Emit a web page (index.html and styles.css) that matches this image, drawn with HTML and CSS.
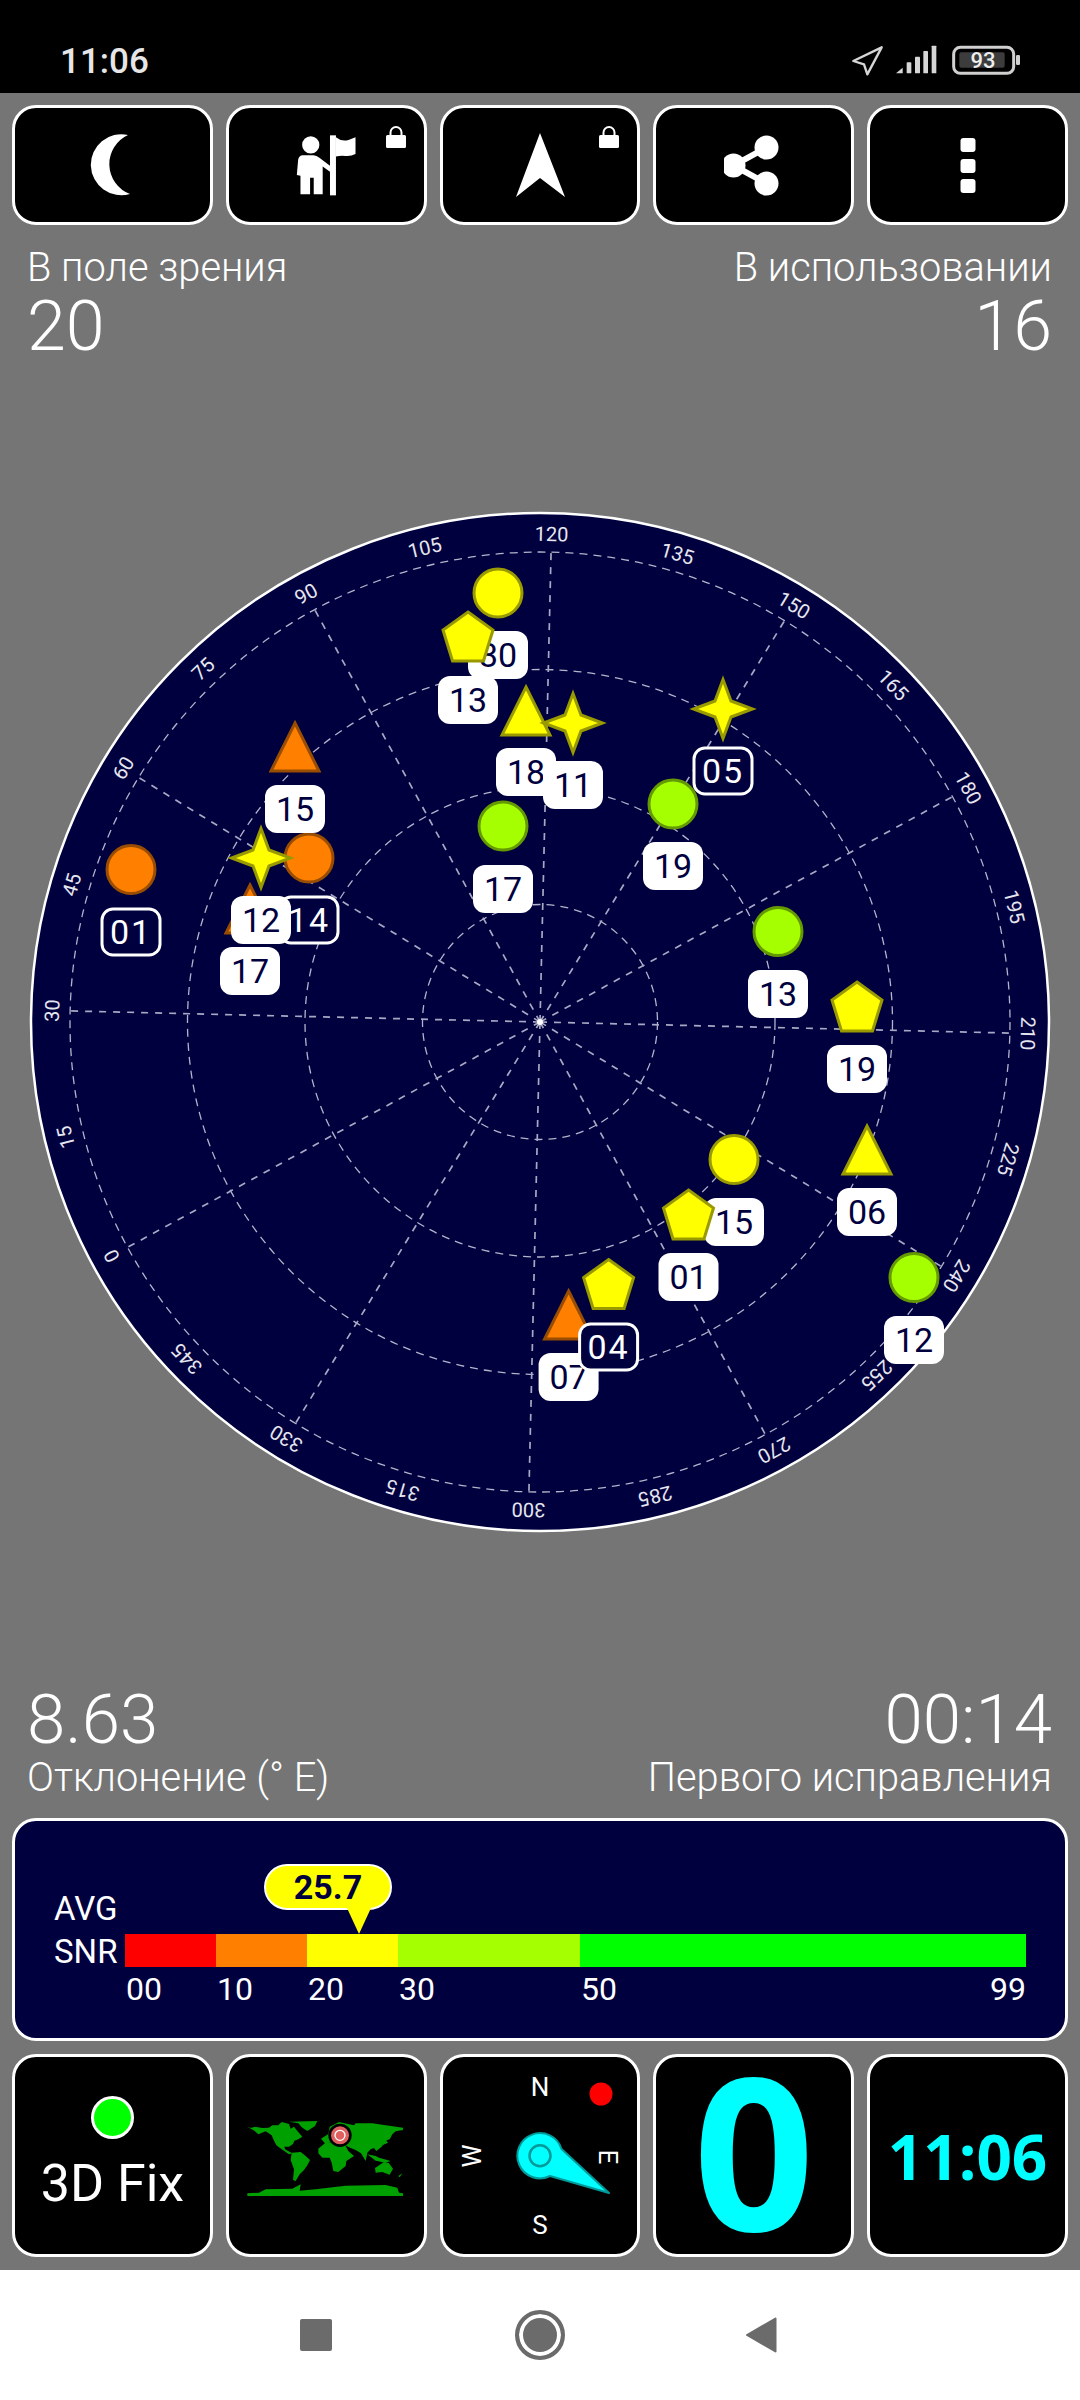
FILE: index.html
```html
<!DOCTYPE html>
<html lang="ru">
<head>
<meta charset="utf-8">
<title>GPS Test</title>
<link rel="stylesheet" href="styles.css">
</head>
<body>
<div class="app">
  <header class="status">
    <span class="clock">11:06</span>
    <svg class="status-icons" viewBox="0 0 570 150" width="190" height="50">
      <path class="loc" d="M40 78 L125 37 L82 118 L72 88 Z"/>
      <g class="bars">
        <path d="M168 115 L188 98 V115 Z"/>
        <rect x="200" y="82" width="14" height="33" rx="2"/>
        <rect x="225" y="65" width="15" height="50" rx="2"/>
        <rect x="250" y="48" width="14" height="67" rx="2"/>
        <rect x="275" y="32" width="14" height="83" rx="2"/>
      </g>
      <rect class="bat-out" x="341" y="37" width="180" height="78" rx="20"/>
      <rect class="bat-in" x="358" y="52" width="136" height="46" rx="6"/>
      <rect class="bat-nub" x="528" y="60" width="12" height="30" rx="4"/>
      <text class="bat-txt" x="429" y="98">93</text>
    </svg>
  </header>

  <main class="main">
    <nav class="row row-top">
      <div class="btn">
        <svg class="ico" viewBox="87 130 52 70" width="52" height="70"><path d="M129 135 A30.5 30.5 0 1 0 131 194 A32 32 0 0 1 129 135 Z"/></svg>
      </div>
      <div class="btn">
        <svg class="ico" viewBox="48 40 180 190" width="60" height="63">
          <circle cx="92" cy="73" r="26"/>
          <path d="M66 104 H100 Q110 104 118 112 L150 136 V154 L128 138 V222 H101 V172 H90 V222 H61 V166 L50 164 L54 118 Q56 106 66 104 Z"/>
          <rect x="150" y="44" width="18" height="181"/>
          <path d="M168 50 Q185 64 206 58 Q218 54 227 50 V100 Q212 108 197 106 Q182 104 168 108 Z"/>
        </svg>
        <svg class="lock" viewBox="0 0 20 22" width="20" height="22"><path class="shackle" d="M4.5 10 V6.5 A5.5 5.5 0 0 1 15.5 6.5 V10"/><rect y="9" width="20" height="13" rx="1.5"/></svg>
      </div>
      <div class="btn">
        <svg class="ico" viewBox="510 130 60 70" width="60" height="70"><path d="M540 133 L565 197 L540 178 L516 197 Z"/></svg>
        <svg class="lock" viewBox="0 0 20 22" width="20" height="22"><path class="shackle" d="M4.5 10 V6.5 A5.5 5.5 0 0 1 15.5 6.5 V10"/><rect y="9" width="20" height="13" rx="1.5"/></svg>
      </div>
      <div class="btn">
        <svg class="ico" viewBox="723 130 60 70" width="60" height="70">
          <path class="share-line" d="M765.5 147.5 L732.5 165.5 L765.5 183.5"/>
          <circle cx="765.5" cy="147.5" r="12"/><circle cx="732.5" cy="165.5" r="12"/><circle cx="765.5" cy="183.5" r="12"/>
        </svg>
      </div>
      <div class="btn">
        <svg class="ico" viewBox="947 130 40 70" width="40" height="70">
          <rect x="959.5" y="138" width="15" height="14" rx="3"/>
          <rect x="959.5" y="159" width="15" height="14" rx="3"/>
          <rect x="959.5" y="179" width="15" height="14" rx="3"/>
        </svg>
      </div>
    </nav>

    <section class="stats stats-top">
      <div class="stat"><div class="stat-label">В поле зрения</div><div class="stat-value stat-value-t">20</div></div>
      <div class="stat stat-right"><div class="stat-label">В использовании</div><div class="stat-value stat-value-t">16</div></div>
    </section>

    <svg class="sky" viewBox="0 500 1080 1044" width="1080" height="1044">
      <defs>
        <g id="m-circle"><circle r="24"/></g>
        <g id="m-tri"><path d="M0 -23 L24 25 H-24 Z"/></g>
        <g id="m-pent"><path d="M0 -25 L25 -7 L15.5 24 H-15.5 L-25 -7 Z"/></g>
        <g id="m-star"><path d="M0 -29.5 L8 -8 L29.5 0 L8 8 L0 29.5 L-8 8 L-29.5 0 L-8 -8 Z"/></g>
      </defs>
      <circle class="disc" cx="540" cy="1022" r="509"/>
      <g transform="translate(540 1022)">
        <g class="rings">
          <circle r="117.5"/><circle r="235"/><circle r="352.5"/><circle r="470"/>
        </g>
        <g class="spokes">
          <line y2="-470" transform="rotate(1.35)"/>
          <line y2="-470" transform="rotate(31.35)"/>
          <line y2="-470" transform="rotate(61.35)"/>
          <line y2="-470" transform="rotate(91.35)"/>
          <line y2="-470" transform="rotate(121.35)"/>
          <line y2="-470" transform="rotate(151.35)"/>
          <line y2="-470" transform="rotate(181.35)"/>
          <line y2="-470" transform="rotate(211.35)"/>
          <line y2="-470" transform="rotate(241.35)"/>
          <line y2="-470" transform="rotate(271.35)"/>
          <line y2="-470" transform="rotate(301.35)"/>
          <line y2="-470" transform="rotate(331.35)"/>
        </g>
        <circle class="hub" r="3"/>
        <g class="ticks">
          <text y="-481" transform="rotate(1.35)">120</text>
          <text y="-481" transform="rotate(16.35)">135</text>
          <text y="-481" transform="rotate(31.35)">150</text>
          <text y="-481" transform="rotate(46.35)">165</text>
          <text y="-481" transform="rotate(61.35)">180</text>
          <text y="-481" transform="rotate(76.35)">195</text>
          <text y="-481" transform="rotate(91.35)">210</text>
          <text y="-481" transform="rotate(106.35)">225</text>
          <text y="-481" transform="rotate(121.35)">240</text>
          <text y="-481" transform="rotate(136.35)">255</text>
          <text y="-481" transform="rotate(151.35)">270</text>
          <text y="-481" transform="rotate(166.35)">285</text>
          <text y="-481" transform="rotate(181.35)">300</text>
          <text y="-481" transform="rotate(196.35)">315</text>
          <text y="-481" transform="rotate(211.35)">330</text>
          <text y="-481" transform="rotate(226.35)">345</text>
          <text y="-481" transform="rotate(241.35)">0</text>
          <text y="-481" transform="rotate(256.35)">15</text>
          <text y="-481" transform="rotate(271.35)">30</text>
          <text y="-481" transform="rotate(286.35)">45</text>
          <text y="-481" transform="rotate(301.35)">60</text>
          <text y="-481" transform="rotate(316.35)">75</text>
          <text y="-481" transform="rotate(331.35)">90</text>
          <text y="-481" transform="rotate(346.35)">105</text>
        </g>
      </g>

      <use class="c-yellow" href="#m-circle" x="498" y="593"/>
      <g class="lbl" transform="translate(498 655)"><rect x="-30" y="-24" width="60" height="48" rx="12"/><text y="12">30</text></g>
      <use class="c-yellow" href="#m-pent" x="468" y="637"/>
      <g class="lbl" transform="translate(468 700)"><rect x="-30" y="-24" width="60" height="48" rx="12"/><text y="12">13</text></g>
      <use class="c-yellow" href="#m-tri" x="526" y="710"/>
      <g class="lbl" transform="translate(526 772)"><rect x="-30" y="-24" width="60" height="48" rx="12"/><text y="12">18</text></g>
      <use class="c-yellow" href="#m-star" x="573" y="723"/>
      <g class="lbl" transform="translate(573 785)"><rect x="-30" y="-24" width="60" height="48" rx="12"/><text y="12">11</text></g>
      <use class="c-lime" href="#m-circle" x="503" y="826"/>
      <g class="lbl" transform="translate(503 889)"><rect x="-30" y="-24" width="60" height="48" rx="12"/><text y="12">17</text></g>

      <use class="c-orange" href="#m-circle" x="131" y="869.5"/>
      <g class="lbl lbl-o" transform="translate(131 932)"><rect x="-29" y="-23" width="58" height="46" rx="11"/><text y="12">01</text></g>
      <use class="c-orange" href="#m-circle" x="309" y="858"/>
      <g class="lbl lbl-o" transform="translate(309 920)"><rect x="-29" y="-23" width="58" height="46" rx="11"/><text y="12">14</text></g>
      <use class="c-orange" href="#m-tri" x="250" y="908"/>
      <g class="lbl" transform="translate(250 971)"><rect x="-30" y="-24" width="60" height="48" rx="12"/><text y="12">17</text></g>
      <use class="c-orange" href="#m-tri" x="295" y="746"/>
      <g class="lbl" transform="translate(295 809)"><rect x="-30" y="-24" width="60" height="48" rx="12"/><text y="12">15</text></g>
      <use class="c-yellow" href="#m-star" x="261" y="858"/>
      <g class="lbl" transform="translate(261 920)"><rect x="-30" y="-24" width="60" height="48" rx="12"/><text y="12">12</text></g>

      <use class="c-yellow" href="#m-star" x="723" y="709"/>
      <g class="lbl lbl-o" transform="translate(723 771)"><rect x="-29" y="-23" width="58" height="46" rx="11"/><text y="12">05</text></g>
      <use class="c-lime" href="#m-circle" x="673" y="804"/>
      <g class="lbl" transform="translate(673 866)"><rect x="-30" y="-24" width="60" height="48" rx="12"/><text y="12">19</text></g>
      <use class="c-lime" href="#m-circle" x="778" y="931.5"/>
      <g class="lbl" transform="translate(778 994)"><rect x="-30" y="-24" width="60" height="48" rx="12"/><text y="12">13</text></g>
      <use class="c-yellow" href="#m-pent" x="857" y="1007"/>
      <g class="lbl" transform="translate(857 1069)"><rect x="-30" y="-24" width="60" height="48" rx="12"/><text y="12">19</text></g>
      <use class="c-yellow" href="#m-tri" x="867" y="1149"/>
      <g class="lbl" transform="translate(867 1212)"><rect x="-30" y="-24" width="60" height="48" rx="12"/><text y="12">06</text></g>
      <use class="c-yellow" href="#m-circle" x="734" y="1159.5"/>
      <g class="lbl" transform="translate(734 1222)"><rect x="-30" y="-24" width="60" height="48" rx="12"/><text y="12">15</text></g>
      <use class="c-yellow" href="#m-pent" x="688.5" y="1215"/>
      <g class="lbl" transform="translate(688.5 1277)"><rect x="-30" y="-24" width="60" height="48" rx="12"/><text y="12">01</text></g>
      <use class="c-lime" href="#m-circle" x="914" y="1277.5"/>
      <g class="lbl" transform="translate(914 1340)"><rect x="-30" y="-24" width="60" height="48" rx="12"/><text y="12">12</text></g>
      <use class="c-orange" href="#m-tri" x="568.6" y="1314"/>
      <g class="lbl" transform="translate(568.6 1377)"><rect x="-30" y="-24" width="60" height="48" rx="12"/><text y="12">07</text></g>
      <use class="c-yellow" href="#m-pent" x="608.6" y="1284.5"/>
      <g class="lbl lbl-o" transform="translate(608.6 1347)"><rect x="-29" y="-23" width="58" height="46" rx="11"/><text y="12">04</text></g>
    </svg>

    <section class="stats stats-bottom">
      <div class="stat"><div class="stat-value">8.63</div><div class="stat-label stat-label-b">Отклонение (° Е)</div></div>
      <div class="stat stat-right"><div class="stat-value">00:14</div><div class="stat-label stat-label-b">Первого исправления</div></div>
    </section>

    <section class="snr">
      <div class="snr-tip"><span>25.7</span></div>
      <div class="snr-avg">AVG</div>
      <div class="snr-spacer"></div>
      <div class="snr-name">SNR</div>
      <div class="snr-bar">
        <i class="seg seg-red"></i><i class="seg seg-orange"></i><i class="seg seg-yellow"></i><i class="seg seg-lime"></i><i class="seg seg-green"></i>
      </div>
      <div class="snr-spacer"></div>
      <div class="snr-scale">
        <span>00</span><span>10</span><span>20</span><span>30</span><span>50</span><span class="scale-end">99</span>
      </div>
    </section>

    <nav class="row row-bottom">
      <div class="btn btn-fix">
        <i class="fix-dot"></i>
        <span class="fix-text">3D Fix</span>
      </div>
      <div class="btn">
        <svg class="map" viewBox="0 0 525 300" width="175" height="100">
          <path d="M25 62 L36 66 L48 62 L70 66 L90 65 L100 58 L118 58 L128 48 L150 54 L155 68 L165 62 L175 75 L190 92 L178 100 L166 104 L162 114 L150 122 L136 122 L138 130 L160 142 L150 145 L128 130 L112 118 L104 102 L98 88 L80 76 L58 85 L46 74 Z"/>
          <path d="M150 47 L235 45 L228 60 L205 75 L190 65 L178 52 Z"/>
          <path d="M158 140 L185 138 L200 150 L213 162 L205 178 L195 192 L182 205 L170 225 L162 222 L165 190 L155 162 Z"/>
          <path d="M238 128 L262 108 L290 110 L318 116 L328 135 L345 150 L322 165 L320 180 L298 198 L283 195 L278 170 L272 155 L250 155 L238 142 Z"/>
          <path d="M246 98 L268 84 L272 62 L300 48 L345 58 L350 52 L400 52 L440 58 L492 65 L492 72 L470 76 L460 85 L452 100 L438 105 L428 122 L412 135 L405 126 L395 130 L385 140 L380 165 L366 142 L350 132 L335 126 L318 118 L290 106 L258 112 Z"/>
          <path d="M385 145 L410 150 L420 155 L455 165 L440 170 L410 164 Z"/>
          <path d="M435 95 L447 110 L430 118 Z"/>
          <path d="M408 186 L435 168 L450 172 L462 188 L452 206 L430 198 L410 200 Z"/>
          <path d="M478 210 L490 202 L482 214 Z"/>
          <path d="M25 262 L60 260 L80 250 L160 248 L185 235 L182 254 L230 250 L320 239 L440 237 L475 245 L480 260 L492 262 V270 H25 Z"/>
          <circle class="pin-back" cx="303" cy="88" r="35"/>
          <circle class="pin" cx="303" cy="88" r="27"/>
          <circle class="pin-ring" cx="303" cy="88" r="15"/>
        </svg>
      </div>
      <div class="btn">
        <svg class="compass" viewBox="443 2057 194 197" width="194" height="197">
          <text class="dir" x="540" y="2096">N</text>
          <text class="dir" x="540" y="2234">S</text>
          <text class="dir" transform="translate(481 2156) rotate(-90)">W</text>
          <text class="dir" transform="translate(599 2157) rotate(90)">E</text>
          <circle class="red-dot" cx="601" cy="2094" r="11.5"/>
          <path class="needle" d="M561.5 2149 L609 2193 L550 2176 A22.6 22.6 0 1 1 561.5 2149 Z"/>
          <circle class="needle-ring" cx="540" cy="2155.7" r="10.5"/>
        </svg>
      </div>
      <div class="btn"><span class="big-zero">0</span></div>
      <div class="btn"><span class="big-time">11:06</span></div>
    </nav>
  </main>

  <footer class="navbar">
    <i class="nav-square"></i>
    <i class="nav-home"></i>
    <svg class="nav-back" viewBox="0 0 32 36" width="32" height="36"><path d="M30.5 1.5 V34.5 L2 18 Z"/></svg>
  </footer>
</div>
</body>
</html>
```

FILE: styles.css
```css
* { box-sizing: border-box; }
html, body { margin: 0; padding: 0; }
body { font-family: Roboto, "Liberation Sans", sans-serif; background: #757575; color: #fff; }
.app { width: 1080px; height: 2400px; display: flex; flex-direction: column; overflow: hidden; }

.status { height: 93px; background: #000; display: flex; align-items: flex-start; justify-content: space-between; padding-right: 50px; }
.clock { margin: 42px 0 0 60px; font-size: 35px; line-height: 40px; font-weight: 500; color: #e6e6e6; }
.status-icons { margin-top: 35px; display: block; }
.loc { fill: none; stroke: #d6d6d6; stroke-width: 7; stroke-linejoin: round; }
.bars { fill: #d6d6d6; }
.bat-out { fill: none; stroke: #d0d0d0; stroke-width: 9; }
.bat-in { fill: #3c3c3c; }
.bat-nub { fill: #d0d0d0; }
.bat-txt { font-size: 66px; font-weight: 500; fill: #eee; text-anchor: middle; }

.main { flex: 1; display: flex; flex-direction: column; background: #757575; }

.row { display: grid; grid-template-columns: repeat(5, 1fr); gap: 13px; padding: 0 12px; }
.row-top { margin-top: 12px; height: 120px; }
.row-bottom { margin-top: 13px; height: 203px; }
.btn { position: relative; background: #000; border: 3px solid #fff; border-radius: 24px; display: flex; align-items: center; justify-content: center; }
.ico { display: block; fill: #fff; }
.lock { position: absolute; top: 18px; right: 18px; fill: #fff; }
.shackle { fill: none; stroke: #fff; stroke-width: 2; }
.share-line { fill: none; stroke: #fff; stroke-width: 6; }

.stats { display: flex; justify-content: space-between; padding: 0 28px 0 27px; }
.stats-top { margin-top: 21px; }
.stats-bottom { margin-top: 141px; }
.stat-right { text-align: right; }
.stat-label { font-size: 39.8px; line-height: 44px; font-weight: 300; }
.stat-label-b { margin-top: 1px; }
.stat-value { font-size: 69px; line-height: 70px; font-weight: 300; }
.stat-value-t { font-size: 70px; margin-top: 1px; }

.sky { display: block; margin-top: 139px; }
.disc { fill: #00003f; stroke: #fff; stroke-width: 2.5; }
.rings circle { fill: none; stroke: #b4b4cc; stroke-width: 1.3; stroke-dasharray: 8 6; }
.spokes line { stroke: #a8a8c4; stroke-width: 1.7; stroke-dasharray: 7 7; }
.hub { fill: #fff; }
.ticks text { font-size: 20px; fill: #e6e6ee; text-anchor: middle; }
.c-yellow { fill: #ff0; stroke: #999900; stroke-width: 3; }
.c-orange { fill: #ff8000; stroke: #994d00; stroke-width: 3; }
.c-lime { fill: #a6ff00; stroke: #649900; stroke-width: 3; }
.lbl rect { fill: #fff; }
.lbl text { font-size: 34px; fill: #00003f; text-anchor: middle; }
.lbl-o rect { fill: #00003f; stroke: #fff; stroke-width: 3; }
.lbl-o text { fill: #fff; letter-spacing: 2px; }

.snr { position: relative; margin: 18px 12px 0; height: 223px; background: #00003f; border: 3px solid #fff; border-radius: 24px; padding: 70px 39px 0 39px; display: grid; grid-template-columns: 71px 1fr; grid-template-rows: 43px 33px auto; }
.snr-avg { font-size: 33px; line-height: 36px; }
.snr-name { font-size: 33px; line-height: 35px; }
.snr-bar { display: grid; grid-template-columns: 91px 91px 91px 182px 1fr; }
.seg { display: block; }
.seg-red { background: #f00; }
.seg-orange { background: #ff8000; }
.seg-yellow { background: #ff0; }
.seg-lime { background: #a6ff00; }
.seg-green { background: #0f0; }
.snr-scale { margin-top: 5px; display: grid; grid-template-columns: 91px 91px 91px 182px 1fr auto; font-size: 32px; line-height: 35px; padding-left: 1px; }
.snr-tip { position: absolute; left: 249px; top: 43px; width: 128px; height: 46px; background: #ff0; border: 2px solid #fff; border-radius: 23px; display: flex; align-items: center; justify-content: center; color: #00003f; font-size: 34px; font-weight: 700; }
.snr-tip::after { content: ""; position: absolute; left: 81px; top: 42px; border-left: 12px solid transparent; border-right: 12px solid transparent; border-top: 26px solid #ff0; }

.btn-fix { flex-direction: column; justify-content: flex-start; }
.fix-dot { display: block; margin-top: 39px; width: 43px; height: 43px; border-radius: 50%; background: #0f0; border: 3px solid #fff; }
.fix-text { margin-top: 20px; font-size: 52px; line-height: 50px; font-weight: 400; }

.map { display: block; fill: #00a000; }
.pin-back { fill: #000; }
.pin { fill: #e06060; }
.pin-ring { fill: none; stroke: #fff; stroke-width: 4; }

.compass { display: block; }
.dir { font-size: 26px; fill: #fff; text-anchor: middle; }
.red-dot { fill: #f00; }
.needle { fill: #0ff; stroke: #009a9a; stroke-width: 2; stroke-linejoin: round; }
.needle-ring { fill: none; stroke: #009a9a; stroke-width: 2.5; }

.big-zero { font-family: "Open Sans", sans-serif; font-size: 212px; line-height: 170px; font-weight: 700; color: #0ff; padding-bottom: 13px; }
.big-time { font-family: "Open Sans", sans-serif; font-size: 62px; line-height: 1; font-weight: 700; color: #0ff; }

.navbar { height: 130px; background: #fff; display: flex; align-items: center; justify-content: center; gap: 183px; padding-right: 4px; }
.nav-square { display: block; width: 32px; height: 32px; border-radius: 2px; background: #6b6b6b; }
.nav-home { display: block; width: 50px; height: 50px; border-radius: 50%; background: #6b6b6b; border: 4px solid #6b6b6b; box-shadow: inset 0 0 0 4px #fff; }
.nav-back { display: block; margin-left: -3px; fill: #6b6b6b; stroke: #6b6b6b; stroke-width: 2; stroke-linejoin: round; }
```
